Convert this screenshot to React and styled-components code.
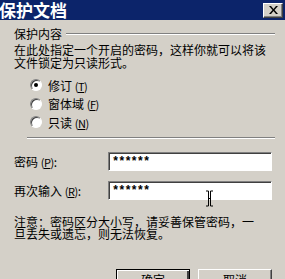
import styled, { createGlobalStyle } from 'styled-components'

const GlobalStyle = createGlobalStyle`
    body {
        margin: 0;
        background: #d4d0c8;
        font-family: "Noto Sans CJK SC", "Liberation Sans", sans-serif;
    }
`;

const radios = [
    { id: 'rev', label: '修订', key: 'T', checked: true },
    { id: 'form', label: '窗体域', key: 'F' },
    { id: 'ro', label: '只读', key: 'N' },
]

const fields = [
    { id: 'pw', label: '密码', key: 'P' },
    { id: 'pw2', label: '再次输入', key: 'R' },
]

const Hotkey = ({ k }) => (
    <span className='hk'>(<u>{k}</u>)</span>
)

const App = () => {
    return (
        <Dialog>
            <GlobalStyle />
            <TitleBar>
                <Title>保护文档</Title>
                <CloseButton>
                    <svg width="9" height="8" viewBox="0 0 9 8">
                        <path d="M0 0h2l2.5 3 2.5-3h2L5.5 4 9 8H7L4.5 5 2 8H0l3.5-4z" fill="#000" />
                    </svg>
                </CloseButton>
            </TitleBar>
            <Body>
                <GroupHeader>
                    <span>保护内容</span>
                    <Etched />
                </GroupHeader>
                <Desc>在此处指定一个开启的密码，这样你就可以将该<br />文件锁定为只读形式。</Desc>
                <RadioList>
                    {radios.map(r => (
                        <RadioRow key={r.id}>
                            <RadioCircle $checked={r.checked} />
                            <span>{r.label} <Hotkey k={r.key} /></span>
                        </RadioRow>
                    ))}
                </RadioList>
                <Separator />
                <Fields>
                    {fields.map(f => (
                        <FieldRow key={f.id}>
                            <span>{f.label} <Hotkey k={f.key} />:</span>
                            <Input>******</Input>
                        </FieldRow>
                    ))}
                    <Cursor width="9" height="17" viewBox="0 0 9 17">
                        <path d="M1 1h2.5v15H1M8 1H5.5v15H8M3.5 8.5h2" stroke="#000" strokeWidth="1" fill="none" />
                    </Cursor>
                </Fields>
                <Note>注意：密码区分大小写，请妥善保管密码，一<br />旦丢失或遗忘，则无法恢复。</Note>
                <Buttons>
                    <Button $default>确定</Button>
                    <Button>取消</Button>
                </Buttons>
            </Body>
        </Dialog>
    )
}

const Dialog = styled.div`
    width: 285px;
    height: 279px;
    overflow: hidden;
    background: #d4d0c8;
    color: #000;
    font-size: 12px;
    .hk {
        font-size: 11px;
        letter-spacing: -0.5px;
    }
`;

const TitleBar = styled.div`
    height: 20px;
    background: #0c246a;
    display: flex;
    align-items: center;
    justify-content: space-between;
    padding-right: 2px;
`;

const Title = styled.div`
    color: #fff;
    font-size: 17px;
    font-weight: bold;
    line-height: 20px;
    letter-spacing: 0;
    margin-left: -1px;
`;

const CloseButton = styled.div`
    width: 20px;
    height: 15px;
    box-sizing: border-box;
    background: #d4d0c8;
    border: 1px solid;
    border-color: #fff #404040 #404040 #fff;
    box-shadow: inset -1px -1px #808080;
    display: flex;
    align-items: center;
    justify-content: center;
`;

const Body = styled.div`
    padding: 7px 10px 0 14px;
`;

const GroupHeader = styled.div`
    display: flex;
    align-items: center;
    gap: 4px;
    line-height: 14px;
`;

const Etched = styled.div`
    flex: 1;
    height: 0;
    border-top: 1px solid #808080;
    border-bottom: 1px solid #fff;
`;

const Desc = styled.div`
    margin-top: 2px;
    line-height: 13px;
`;

const RadioList = styled.div`
    margin-top: 7px;
    padding-left: 16px;
`;

const RadioRow = styled.div`
    height: 18.5px;
    display: flex;
    align-items: center;
    gap: 6px;
`;

const RadioCircle = styled.span`
    width: 12px;
    height: 12px;
    box-sizing: border-box;
    border-radius: 50%;
    background: #fff;
    border: 1px solid;
    border-color: #808080 #fff #fff #808080;
    box-shadow: inset 1px 1px #404040;
    display: flex;
    align-items: center;
    justify-content: center;
    &::after {
        content: '';
        width: 4px;
        height: 4px;
        border-radius: 50%;
        background: ${p => p.$checked ? '#000' : 'transparent'};
    }
`;

const Separator = styled.div`
    margin: 5px 0 0 13px;
    border-top: 1px solid #808080;
    border-bottom: 1px solid #fff;
`;

const Fields = styled.div`
    position: relative;
    margin-top: 13px;
    display: flex;
    flex-direction: column;
    gap: 10px;
`;

const FieldRow = styled.div`
    display: grid;
    grid-template-columns: 94px 164px;
    align-items: center;
    height: 19px;
`;

const Input = styled.div`
    height: 19px;
    box-sizing: border-box;
    background: #fff;
    border: 1px solid;
    border-color: #808080 #fff #fff #808080;
    box-shadow: inset 1px 1px #404040;
    padding: 3px 0 0 3px;
    font-family: "Liberation Mono", monospace;
    font-size: 12px;
    font-weight: bold;
    line-height: 13px;
    letter-spacing: -1px;
`;

const Cursor = styled.svg`
    position: absolute;
    left: 191px;
    top: 38px;
`;

const Note = styled.div`
    margin-top: 16px;
    line-height: 12px;
`;

const Buttons = styled.div`
    margin-top: 29px;
    display: flex;
    justify-content: flex-end;
    gap: 8px;
    padding-right: 3px;
`;

const Button = styled.div`
    width: 74px;
    height: 23px;
    box-sizing: border-box;
    background: #d4d0c8;
    border: 1px solid;
    border-color: ${p => p.$default ? '#000' : '#fff #404040 #404040 #fff'};
    box-shadow: ${p => p.$default
        ? 'inset 1px 1px #fff, inset -2px -2px #404040'
        : 'inset -1px -1px #808080'};
    display: flex;
    justify-content: center;
    padding-top: 3px;
    line-height: 14px;
`;

export default App
